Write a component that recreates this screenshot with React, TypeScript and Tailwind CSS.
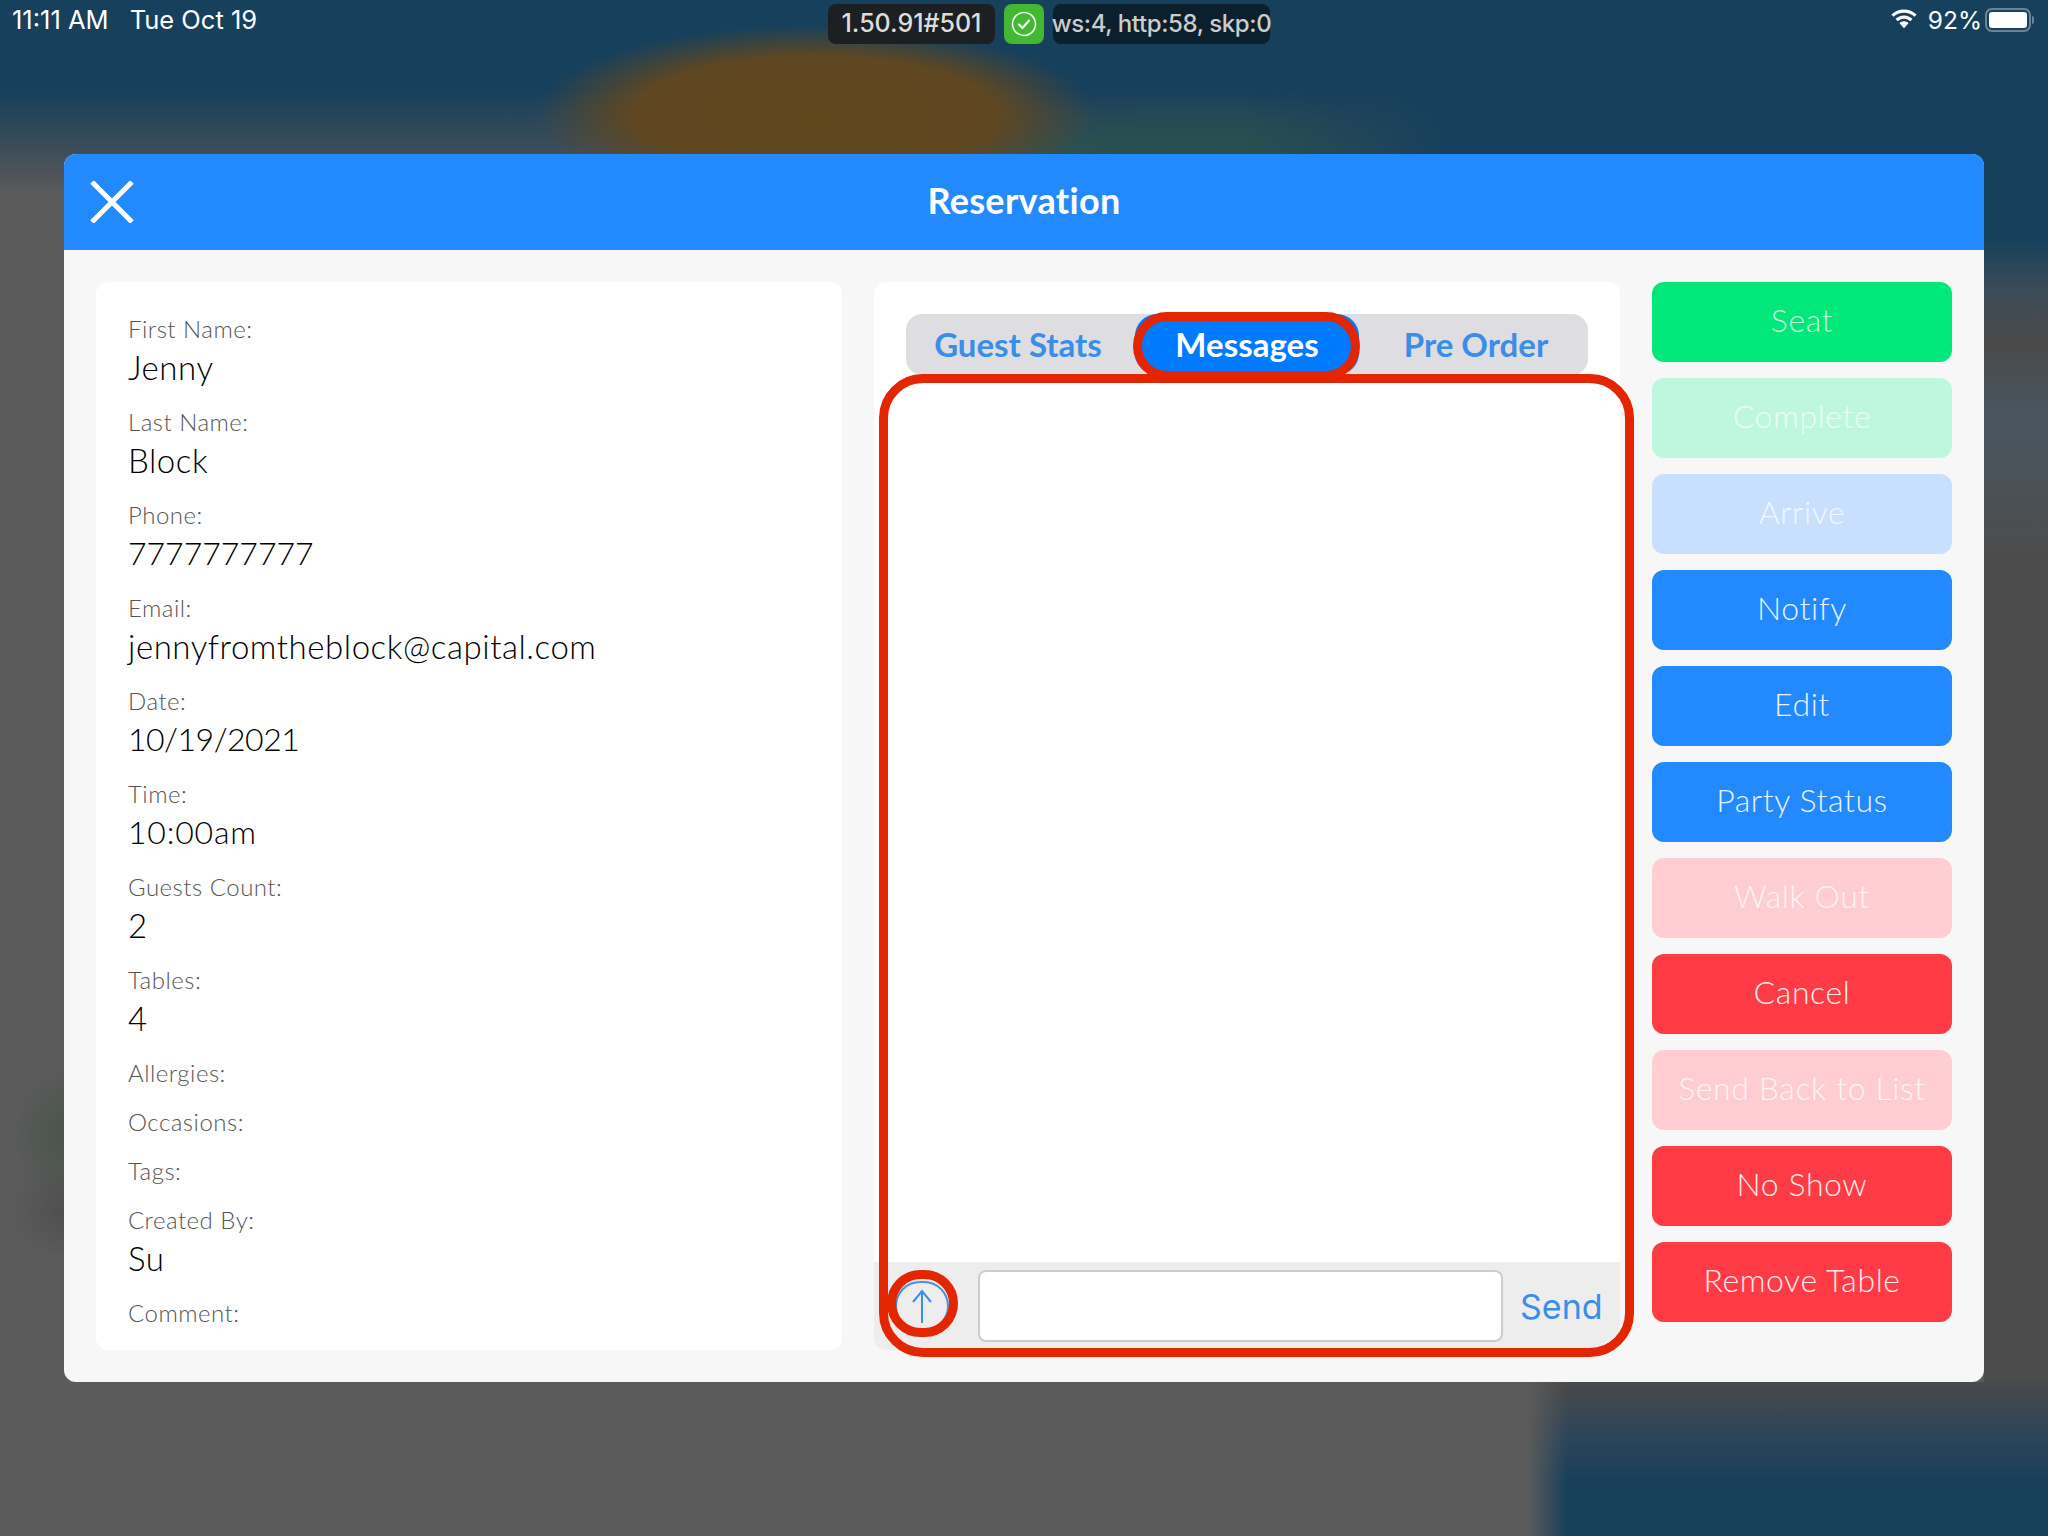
export default function App() {
  const fields: [string, string?, string?][] = [
    ["First Name:", "Jenny"],
    ["Last Name:", "Block"],
    ["Phone:", "7777777777", "text-[32px] tracking-normal"],
    ["Email:", "jennyfromtheblock@capital.com"],
    ["Date:", "10/19/2021", "text-[32px] tracking-[-0.5px]"],
    ["Time:", "10:00am", "text-[32px] tracking-[0.8px]"],
    ["Guests Count:", "2"],
    ["Tables:", "4"],
    ["Allergies:"],
    ["Occasions:"],
    ["Tags:"],
    ["Created By:", "Su"],
    ["Comment:"],
  ];
  const buttons: [string, string][] = [
    ["Seat", "bg-[#00e879] text-[#c4f8e0]"],
    ["Complete", "bg-[#bff7de] text-[#ecfdf5]"],
    ["Arrive", "bg-[#c8dffe] text-[#f1f7ff]"],
    ["Notify", "bg-[#2389ff] text-[#e9f3ff]"],
    ["Edit", "bg-[#2389ff] text-[#e9f3ff]"],
    ["Party Status", "bg-[#2389ff] text-[#e9f3ff]"],
    ["Walk Out", "bg-[#ffcdd2] text-[#fff3f4]"],
    ["Cancel", "bg-[#ff3b45] text-[#ffecee]"],
    ["Send Back to List", "bg-[#ffcdd2] text-[#fff3f4]"],
    ["No Show", "bg-[#ff3b45] text-[#ffecee]"],
    ["Remove Table", "bg-[#ff3b45] text-[#ffecee]"],
  ];
  return (
    <div className="relative w-[2048px] h-[1536px] overflow-hidden bg-[#5b5b5b] font-['Lato',sans-serif]">
      {/* blurred wallpaper */}
      <div className="absolute inset-x-0 top-0 h-[240px] bg-[radial-gradient(ellipse_280px_90px_at_815px_115px,#62461c_0%,#5f4722_65%,transparent_100%),radial-gradient(ellipse_330px_80px_at_1200px_175px,#1a5349_0%,transparent_100%),linear-gradient(to_bottom,#17405c_0px,#17405c_90px,#3a4c58_145px,#5b5b5b_195px,#5b5b5b_240px)]" />
      <div className="absolute right-0 top-0 w-[800px] h-[600px] [mask-image:linear-gradient(to_right,transparent,black_200px)] bg-[linear-gradient(to_bottom,#17405c_0px,#17405c_238px,#3c4c58_292px,#4a4a4a_343px,#4a5660_420px,#4c4c4c_560px)]" />
      <div className="absolute right-0 top-[600px] bottom-[154px] w-[64px] bg-[#4c4c4c]" />
      <div className="absolute left-0 top-[1050px] w-[70px] h-[240px] bg-[radial-gradient(ellipse_60px_70px_at_70px_85px,#48544a_0%,transparent_100%),radial-gradient(ellipse_60px_50px_at_70px_160px,#4e4e4e_0%,transparent_100%)]" />
      <div className="absolute right-0 bottom-0 w-[520px] h-[154px] [mask-image:linear-gradient(to_right,transparent,black_40px)] bg-[linear-gradient(to_bottom,#4a4a4a_0px,#2f4559_50px,#173f5a_100px)]" />

      <div className="relative">
        {/* status bar */}
        <div className="flex h-[48px] items-start font-['Inter',sans-serif]">
          <div className="flex w-[828px] gap-[21px] pl-[12px] pt-[5px] text-[25.5px] leading-[30px] text-white">
            <span>11:11 AM</span>
            <span>Tue Oct 19</span>
          </div>
          <div className="mt-[4px] flex h-[40px] gap-[9px]">
            <div className="flex w-[167px] items-center justify-center rounded-[8px] bg-[#1c2023] text-[25px] font-medium text-[#dddddd]">1.50.91#501</div>
            <div className="flex w-[40px] items-center justify-center rounded-[8px] bg-[#43b933]">
              <svg width="26" height="26" viewBox="0 0 26 26" fill="none" stroke="#f2fbef" strokeWidth="1.6">
                <circle cx="13" cy="13" r="11.5" />
                <path d="M8 13.5l3.5 3.5L18 9.5" strokeWidth="2.2" strokeLinecap="round" strokeLinejoin="round" />
              </svg>
            </div>
            <div className="flex w-[217px] items-center justify-center whitespace-nowrap rounded-[8px] bg-[#0c1f2d] text-[24px] font-medium tracking-[-0.4px] text-[#cccccc]">ws:4, http:58, skp:0</div>
          </div>
          <div className="flex flex-1 items-start justify-end pr-[14px] pt-[5px] text-[24.5px] leading-[30px] text-white">
            <svg className="mr-[9px] mt-[3px]" width="30" height="23" viewBox="0 0 26 20" fill="#ffffff">
              <path d="M13 4.200c3.500 0 6.700 1.300 9.100 3.500l1.900-2.100C21.100 2.900 17.200 1.200 13 1.200S4.900 2.900 2 5.600l1.900 2.100C6.300 5.500 9.500 4.200 13 4.200z" />
              <path d="M13 9.400c2.100 0 4 .8 5.500 2.100l1.900-2.100C18.400 7.600 15.800 6.500 13 6.500S7.600 7.600 5.600 9.400l1.900 2.100C9 10.200 10.900 9.400 13 9.400z" />
              <path d="M13 11.600c-1.500 0-2.900.6-3.900 1.600L13 17.700l3.900-4.500c-1-1-2.400-1.600-3.900-1.600z" />
            </svg>
            <span>92%</span>
            <div className="ml-[3px] mt-[3px] flex items-center">
              <div className="flex h-[24px] w-[46px] rounded-[7px] border-2 border-[#6b8497] p-[2px]">
                <div className="w-[38px] rounded-[3px] bg-white" />
              </div>
              <div className="ml-[1px] h-[8px] w-[2px] rounded-r-[2px] bg-[#6b8497]" />
            </div>
          </div>
        </div>

        {/* modal */}
        <div className="ml-[64px] mt-[106px] w-[1920px] h-[1228px] overflow-hidden rounded-[12px] bg-[#f7f7f7]">
          <div className="relative flex h-[96px] items-center justify-center bg-[#2389ff]">
            <svg className="absolute left-[26px] top-[27px]" width="44" height="42" viewBox="0 0 44 42" fill="none" stroke="#ffffff" strokeWidth="5">
              <path d="M2 1l40 40M42 1L2 41" />
            </svg>
            <span className="pb-[4px] text-[36px] font-bold tracking-[0.3px] text-white">Reservation</span>
          </div>

          <div className="flex gap-[32px] p-[32px]">
            {/* details */}
            <div className="w-[746px] h-[1068px] rounded-[12px] bg-white px-[32px] pt-[32px]">
              {fields.map(([label, value, cls]) => (
                <div key={label} className="mb-[19px]">
                  <div className="h-[30px] text-[24px] leading-[30px] tracking-[0.5px] font-light text-[#555555]">{label}</div>
                  {value && (
                    <div className={`h-[44px] leading-[46px] font-light text-black ${cls ?? "text-[33px] tracking-[0.55px]"}`}>{value}</div>
                  )}
                </div>
              ))}
            </div>

            {/* messages */}
            <div className="relative flex w-[746px] h-[1068px] flex-col overflow-visible rounded-[12px] bg-white">
              <div className="px-[32px] pt-[32px]">
                <div className="flex h-[61px] rounded-[16px] bg-[#dedde2] text-[33px] font-bold text-[#3a8ee8]">
                  <div className="flex flex-1 items-center justify-center">Guest Stats</div>
                  <div className="flex flex-1 items-center justify-center rounded-[22px] mx-[5px] bg-[#007aff] text-white">Messages</div>
                  <div className="flex flex-1 items-center justify-center">Pre Order</div>
                </div>
              </div>
              <div className="flex-1" />
              <div className="flex h-[88px] items-center rounded-b-[12px] bg-[#ededed] pl-[21px]">
                <div className="flex h-[50px] w-[54px] items-center justify-center rounded-full border-2 border-[#4a90e2]">
                  <svg width="24" height="36" viewBox="0 0 24 36" fill="none" stroke="#3a8ee8" strokeWidth="2">
                    <path d="M12 35V3M3 14L12 3l9 11" />
                  </svg>
                </div>
                <div className="ml-[29px] h-[72px] w-[525px] rounded-[8px] border-2 border-[#cccccc] bg-white" />
                <div className="ml-[17px] font-['Inter',sans-serif] text-[34px] text-[#3a8ee8]">Send</div>
              </div>

              {/* red annotations */}
              <div className="absolute left-[5px] top-[92px] h-[983px] w-[755px] rounded-[44px] border-[9px] border-[#e32500]" />
              <div className="absolute left-[259px] top-[30px] h-[68px] w-[227px] rounded-full border-[9px] border-[#e32500]" />
              <div className="absolute left-[13px] top-[988px] h-[67px] w-[71px] rounded-full border-[9px] border-[#e32500]" />
            </div>

            {/* actions */}
            <div className="flex w-[300px] flex-col gap-[16px]">
              {buttons.map(([label, cls]) => (
                <div key={label} className={`flex h-[80px] items-center justify-center rounded-[12px] pb-[4px] text-[32px] tracking-[0.6px] font-light ${cls}`}>{label}</div>
              ))}
            </div>
          </div>
        </div>
      </div>
    </div>
  );
}
